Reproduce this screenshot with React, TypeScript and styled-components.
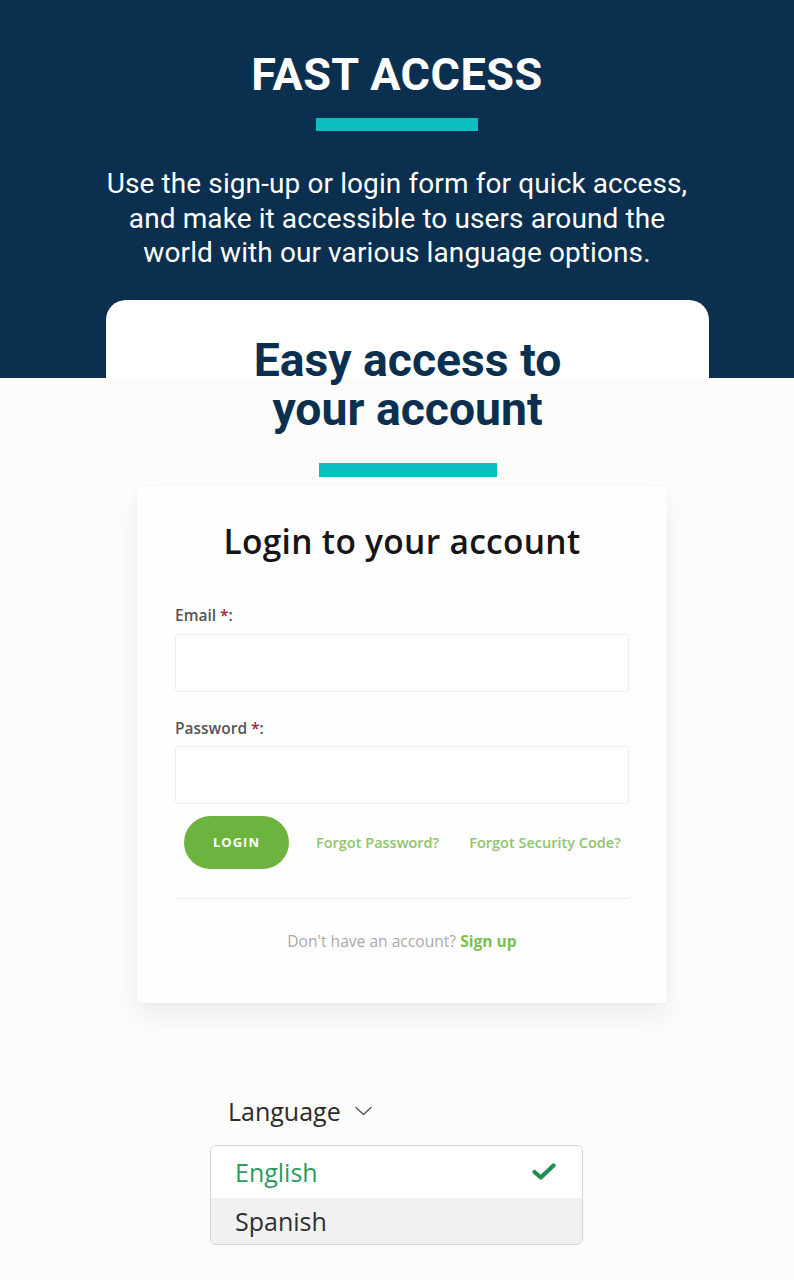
import React from "react";
import styled, { createGlobalStyle } from "styled-components";

const GlobalStyle = createGlobalStyle`
  html, body { margin: 0; padding: 0; background: #fcfcfa; }
  * { box-sizing: border-box; }
`;

const NAVY = "#0b2f4f";
const TEAL = "#0bbfc1";

const Page = styled.div`
  width: 794px;
  min-height: 1280px;
  background: #fcfcfa;
  overflow: hidden;
`;

const Hero = styled.section`
  background: ${NAVY};
  padding: 52px 0 29px;
  display: flex;
  flex-direction: column;
  align-items: center;
  font-family: Roboto, "Liberation Sans", sans-serif;
  color: #fff;
`;

const HeroTitle = styled.h1`
  margin: 0;
  font-size: 45px;
  line-height: 45px;
  font-weight: 700;
  letter-spacing: 0.5px;
`;

const Bar = styled.div<{ $w: number; $h: number }>`
  width: ${(p) => p.$w}px;
  height: ${(p) => p.$h}px;
  background: ${TEAL};
`;

const HeroBar = styled(Bar)`
  margin-top: 21px;
`;

const HeroText = styled.p`
  margin: 36px 0 0;
  font-size: 28px;
  line-height: 34.5px;
  font-weight: 400;
  text-align: center;
  letter-spacing: 0.1px;
`;

const Stage = styled.section`
  background: linear-gradient(to bottom, ${NAVY} 0, ${NAVY} 78px, #fcfcfa 78px);
  padding-bottom: 37px;
`;

const Panel = styled.div`
  margin-left: 106px;
  width: 603px;
  border-radius: 20px 20px 0 0;
  background: linear-gradient(to bottom, #fff 0, #fff 78px, transparent 78px);
  padding-top: 36px;
  display: flex;
  flex-direction: column;
  align-items: center;
  font-family: Roboto, "Liberation Sans", sans-serif;
`;

const PanelTitle = styled.h2`
  margin: 0;
  font-size: 46.3px;
  line-height: 49px;
  font-weight: 700;
  color: ${NAVY};
  text-align: center;
`;

const PanelBar = styled(Bar)`
  margin-top: 29px;
`;

const LoginCard = styled.div`
  margin: 10px 0 0 137px;
  width: 530px;
  background: #fefefe;
  border-radius: 4px;
  box-shadow: 0 14px 26px rgba(0, 0, 0, 0.06), 0 0 6px rgba(0, 0, 0, 0.03);
  padding: 37px 38px 52px;
  font-family: "Open Sans", "Liberation Sans", sans-serif;
  display: flex;
  flex-direction: column;
`;

const CardTitle = styled.h3`
  margin: 0;
  font-size: 33.5px;
  line-height: 35px;
  font-weight: 600;
  letter-spacing: 0.3px;
  color: #161616;
  text-align: center;
`;

const Label = styled.label<{ $top: number }>`
  margin-top: ${(p) => p.$top}px;
  font-size: 15.5px;
  line-height: 20px;
  font-weight: 600;
  color: #555;
`;

const Req = styled.span`
  color: #a3243b;
`;

const Input = styled.div<{ $top: number }>`
  margin-top: ${(p) => p.$top}px;
  height: 58px;
  border: 1px solid #efefef;
  border-radius: 3px;
  background: #fff;
`;

const ActionRow = styled.div`
  margin-top: 12px;
  display: flex;
  align-items: center;
  padding-left: 9px;
`;

const LoginButton = styled.button`
  width: 105px;
  height: 53px;
  border: none;
  border-radius: 27px;
  background: #6cb43f;
  color: #fff;
  font-family: "Open Sans", "Liberation Sans", sans-serif;
  font-size: 13px;
  font-weight: 700;
  letter-spacing: 1px;
  padding: 0;
`;

const LinkText = styled.span<{ $gap: number }>`
  margin-left: ${(p) => p.$gap}px;
  font-size: 14.5px;
  font-weight: 600;
  color: #8fc46d;
`;

const Divider = styled.hr`
  margin: 29px 0 0;
  border: none;
  height: 1px;
  background: #ececec;
`;

const SignupLine = styled.p`
  margin: 32px 0 0;
  text-align: center;
  font-size: 15.6px;
  line-height: 20px;
  color: #aaa;
`;

const SignupLink = styled.span`
  color: #7dbf4f;
  font-weight: 700;
`;

const LangBlock = styled.div`
  margin: 91px 0 0 210px;
  width: 373px;
  font-family: "Open Sans", "Liberation Sans", sans-serif;
`;

const LangToggle = styled.div`
  padding-left: 18px;
  font-size: 25px;
  line-height: 34px;
  color: #2b2b2b;
  display: flex;
  align-items: center;
  gap: 14px;
`;

const Dropdown = styled.div`
  margin-top: 17px;
  border: 1.5px solid #d4d4d4;
  border-radius: 6px;
  overflow: hidden;
  background: #fff;
`;

const Option = styled.div<{ $active?: boolean }>`
  height: ${(p) => (p.$active ? 52 : 46)}px;
  line-height: ${(p) => (p.$active ? 52 : 44)}px;
  padding: 0 26px 0 24px;
  font-size: 25px;
  color: ${(p) => (p.$active ? "#2e9a5e" : "#2f2f2f")};
  background: ${(p) => (p.$active ? "#fff" : "#f1f1f1")};
  display: flex;
  justify-content: space-between;
  align-items: center;
`;

const Chevron = () => (
  <svg width="17" height="10" viewBox="0 0 17 10" fill="none">
    <path d="M1 1.5 L8.5 8.5 L16 1.5" stroke="#555" strokeWidth="1.4" strokeLinecap="round" strokeLinejoin="round" />
  </svg>
);

const Check = () => (
  <svg width="24" height="17" viewBox="0 0 24 17" fill="none">
    <path d="M2.5 9 L8.8 14.5 L21.5 2.5" stroke="#1f8e50" strokeWidth="4.2" strokeLinecap="round" strokeLinejoin="round" />
  </svg>
);

export default function App() {
  return (
    <Page>
      <GlobalStyle />
      <Hero>
        <HeroTitle>FAST ACCESS</HeroTitle>
        <HeroBar $w={162} $h={13} />
        <HeroText>
          Use the sign-up or login form for quick access,
          <br />
          and make it accessible to users around the
          <br />
          world with our various language options.
        </HeroText>
      </Hero>
      <Stage>
        <Panel>
          <PanelTitle>
            Easy access to
            <br />
            your account
          </PanelTitle>
          <PanelBar $w={178} $h={14} />
        </Panel>
        <LoginCard>
          <CardTitle>Login to your account</CardTitle>
          <Label $top={46}>
            Email <Req>*</Req>:
          </Label>
          <Input $top={9} />
          <Label $top={26}>
            Password <Req>*</Req>:
          </Label>
          <Input $top={8} />
          <ActionRow>
            <LoginButton>LOGIN</LoginButton>
            <LinkText $gap={27}>Forgot Password?</LinkText>
            <LinkText $gap={30}>Forgot Security Code?</LinkText>
          </ActionRow>
          <Divider />
          <SignupLine>
            Don't have an account? <SignupLink>Sign up</SignupLink>
          </SignupLine>
        </LoginCard>
        <LangBlock>
          <LangToggle>
            Language
            <Chevron />
          </LangToggle>
          <Dropdown>
            <Option $active>
              English
              <Check />
            </Option>
            <Option>Spanish</Option>
          </Dropdown>
        </LangBlock>
      </Stage>
    </Page>
  );
}
